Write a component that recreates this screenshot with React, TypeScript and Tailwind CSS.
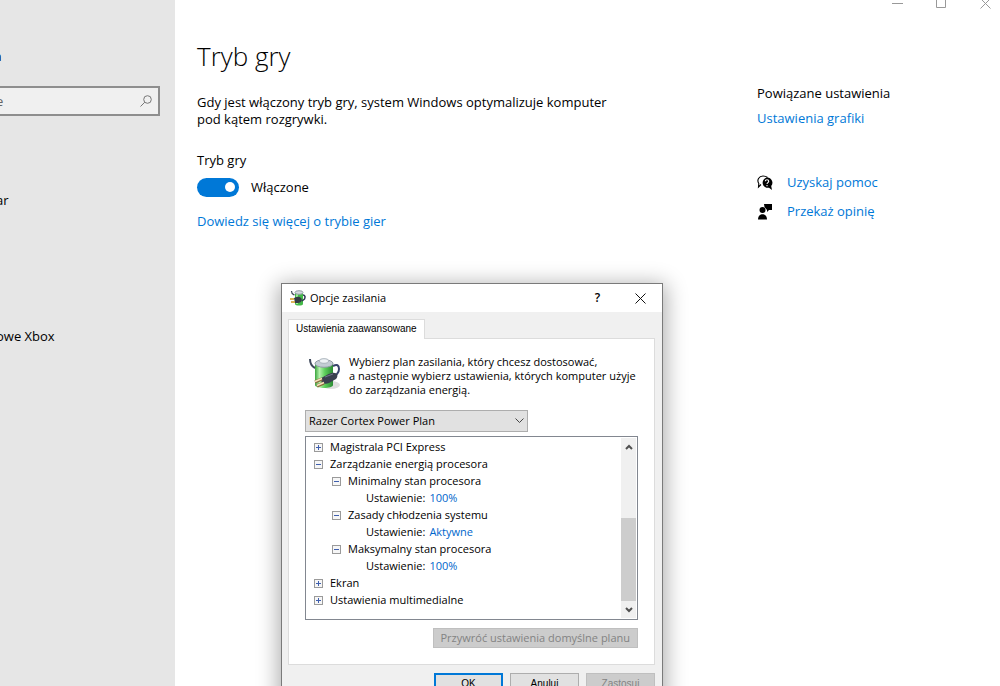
import { useState } from "react";
import type { ReactNode } from "react";

const sidebarItems = [
  { label: "ar", top: "mt-[76px]" },
  { label: "owe Xbox", top: "mt-[119px]" },
];

type TreeNode = {
  label: string;
  open?: boolean;
  value?: string;
  children?: TreeNode[];
};

const powerTree: TreeNode[] = [
  { label: "Magistrala PCI Express", open: false },
  {
    label: "Zarządzanie energią procesora",
    open: true,
    children: [
      { label: "Minimalny stan procesora", open: true, value: "100%" },
      { label: "Zasady chłodzenia systemu", open: true, value: "Aktywne" },
      { label: "Maksymalny stan procesora", open: true, value: "100%" },
    ],
  },
  { label: "Ekran", open: false },
  { label: "Ustawienia multimedialne", open: false },
];

function BatteryIcon({ className }: { className: string }) {
  return (
    <svg className={className} viewBox="0 0 32 34" fill="none">
      <defs>
        <linearGradient id="cell" x1="0" y1="0" x2="1" y2="0">
          <stop offset="0" stopColor="#3aa53d" />
          <stop offset="0.25" stopColor="#b4f2ab" />
          <stop offset="0.55" stopColor="#5ccf5a" />
          <stop offset="1" stopColor="#2b8a34" />
        </linearGradient>
      </defs>
      <ellipse cx="22" cy="28" rx="9" ry="4" fill="#dedede" />
      <path d="M6 6v22c0 4 18 4 18 0V6z" fill="url(#cell)" />
      <ellipse cx="15" cy="6.500" rx="9" ry="3.800" fill="#c3ccd4" stroke="#8f9aa4" />
      <ellipse cx="15" cy="4" rx="4.500" ry="2.300" fill="#eef2f5" stroke="#aab4bc" />
      <path d="M1 2c0 4 1 7 5 9" stroke="#3f4a5c" strokeWidth="2" />
      <path d="M24 9c4-2 6-1 6 3s-1 4-3 6" stroke="#38426b" strokeWidth="2" />
      <path d="M12 21c3-1 8-5 11-5 5-1 7 3 4 6l-7 4c-4 2-9 0-8-5z" fill="#3a404f" />
      <path d="M16 20l8-3" stroke="#70788a" />
      <path d="M13 22l-7 3M15 26l-7 3" stroke="#8a6b3c" strokeWidth="3" />
      <path d="M13 21.500l-7 3M15 25.500l-7 3" stroke="#f5e3bd" strokeWidth="1.400" />
    </svg>
  );
}

function SmallBatteryIcon({ className }: { className: string }) {
  return (
    <svg className={className} viewBox="0 0 16 16" fill="none">
      <path d="M5 3v11c0 2 8 2 8 0V3z" fill="#43b948" />
      <path d="M6 4v10h2V4z" fill="#9be896" />
      <ellipse cx="9" cy="2.500" rx="4" ry="1.800" fill="#d3dadf" stroke="#929da5" />
      <path d="M1.500 1c0 3 1 3 3 4" stroke="#3b4654" strokeWidth="1.200" />
      <path d="M13 5c2 0 2.500 2 1.500 4L12 11" stroke="#2f3853" strokeWidth="1.500" />
      <path d="M4 8c3-1 5-2 7 0s0 5-3 5H5z" fill="#353a45" />
      <path d="M0 9h4M1 12h4" stroke="#d09a22" strokeWidth="1.600" />
    </svg>
  );
}

function HelpIcon() {
  return (
    <svg className="h-4 w-4" viewBox="0 0 16 16" fill="none">
      <path d="M4 9.500L1.500 12l.3-3.500C-.5 5 2 1 6 1c2 0 3.500.6 4.500 1.500" stroke="#000" strokeWidth="1.100" />
      <path d="M10 2.500a5.200 5.200 0 1 0 2 10.200l3 2.300-.8-4A5.200 5.200 0 0 0 10 2.500z" fill="#000" />
      <path d="M8.300 6.300c0-2 3.400-2 3.400 0 0 1.300-1.700 1.300-1.700 2.700M10 10v1.200" stroke="#fff" strokeWidth="1.100" />
    </svg>
  );
}

function FeedbackIcon() {
  return (
    <svg className="h-4 w-4" viewBox="0 0 16 16" fill="#000">
      <path d="M7 0h8v6h-3l-2 2V6L7.500 3z" />
      <circle cx="5.500" cy="6" r="3" />
      <path d="M1 15.500c0-7 9-7 9 0z" />
    </svg>
  );
}

function Expander({ open, label, onClick }: { open: boolean; label: string; onClick: () => void }) {
  return (
    <button type="button" aria-label={label} aria-expanded={open} onClick={onClick} className="mt-[2px] shrink-0">
      <svg className="h-[9px] w-[9px]" viewBox="0 0 9 9" fill="none">
        <rect x="0.5" y="0.5" width="8" height="8" fill="#f6f6f6" stroke="#9a9a9a" />
        <path d={open ? "M2 4.500h5" : "M2 4.500h5M4.500 2v5"} stroke="#3f5fae" />
      </svg>
    </button>
  );
}

function TreeItem({ node }: { node: TreeNode }) {
  const [open, setOpen] = useState(!!node.open);
  return (
    <li>
      <div className="flex h-[17px] items-center gap-[7px]">
        <Expander open={open} label={node.label} onClick={() => setOpen(!open)} />
        <span>{node.label}</span>
      </div>
      {open && node.children && (
        <ul className="pl-[18px]">
          {node.children.map((child) => (
            <TreeItem key={child.label} node={child} />
          ))}
        </ul>
      )}
      {open && node.value && (
        <div className="flex h-[17px] items-center gap-1 pl-[34px]">
          <span>Ustawienie:</span>
          <a href="#" className="text-[#0066cc]">{node.value}</a>
        </div>
      )}
    </li>
  );
}

function SideLink({ icon, children }: { icon: ReactNode; children: ReactNode }) {
  return (
    <a href="#" className="flex h-[29px] items-center gap-[14px] text-[#0078d7]">
      {icon}
      {children}
    </a>
  );
}

function PowerDialog() {
  return (
    <div
      role="dialog"
      aria-label="Opcje zasilania"
      className="absolute top-[283px] left-[281px] w-[382px] border border-[#7a7a7a] bg-[#f0f0f0] font-['Open_Sans',sans-serif] text-[11px] leading-[14px] text-black shadow-[0_4px_20px_3px_rgba(0,0,0,0.32)]"
    >
      {/* Title bar */}
      <div className="flex h-7 items-center bg-white pl-2">
        <SmallBatteryIcon className="h-4 w-4" />
        <h2 className="ml-1 flex-1">Opcje zasilania</h2>
        <button type="button" className="w-[43px] text-[12px] font-semibold">?</button>
        <button type="button" aria-label="Zamknij" className="flex w-[43px] justify-center">
          <svg className="h-[11px] w-[11px]" viewBox="0 0 11 11" stroke="#111">
            <path d="M0.500 0.500l10 10M10.500 0.500l-10 10" />
          </svg>
        </button>
      </div>

      <div className="pt-[7px] pr-[7px] pl-[6px]">
        <button
          type="button"
          className="relative z-10 -mb-px block h-5 border border-b-0 border-[#dcdcdc] bg-white px-[7px] pb-[2px] font-['Liberation_Sans',sans-serif] text-[10px]"
        >
          Ustawienia zaawansowane
        </button>

        <div className="border border-[#dcdcdc] bg-white px-4 pt-4 pb-4">
          <div className="flex gap-2">
            <BatteryIcon className="ml-1 mt-[2px] h-[34px] w-8" />
            <p>
              Wybierz plan zasilania, który chcesz dostosować,<br />
              a następnie wybierz ustawienia, których komputer użyje<br />
              do zarządzania energią.
            </p>
          </div>

          <div className="relative mt-[13px] w-[223px]">
            <select aria-label="Plan zasilania" className="block h-[22px] w-full appearance-none border border-[#adadad] bg-[#e1e1e1] px-[3px]">
              <option>Razer Cortex Power Plan</option>
            </select>
            <svg className="pointer-events-none absolute top-2 right-1 h-[6px] w-[9px]" viewBox="0 0 9 6" fill="none" stroke="#444">
              <path d="M0.500 0.500l4 4 4-4" />
            </svg>
          </div>

          {/* Settings tree */}
          <div className="mt-1 flex h-[184px] border border-[#828790] p-px">
            <ul className="flex-1 pl-[7px]">
              {powerTree.map((node) => (
                <TreeItem key={node.label} node={node} />
              ))}
            </ul>
            <div className="flex w-[15px] flex-col bg-[#f0f0f0]">
              <button type="button" aria-label="W górę" className="flex h-[17px] items-center justify-center">
                <svg className="h-[6px] w-2" viewBox="0 0 8 6" fill="none" stroke="#505050" strokeWidth="2">
                  <path d="M1 5l3-3 3 3" />
                </svg>
              </button>
              <div className="flex-1" />
              <div className="h-[83px] bg-[#cdcdcd]" />
              <button type="button" aria-label="W dół" className="flex h-[17px] items-center justify-center">
                <svg className="h-[6px] w-2" viewBox="0 0 8 6" fill="none" stroke="#505050" strokeWidth="2">
                  <path d="M1 1l3 3 3-3" />
                </svg>
              </button>
            </div>
          </div>

          <button type="button" disabled className="mt-2 ml-auto block h-5 border border-[#bfbfbf] bg-[#cccccc] px-[7px] text-[#838383]">
            Przywróć ustawienia domyślne planu
          </button>
        </div>

        <div className="flex justify-end gap-[7px] pt-2 pb-2 font-['Liberation_Sans',sans-serif] text-[10px]">
          <button type="button" className="h-[22px] w-[69px] border-2 border-[#0078d7] bg-[#e1e1e1]">OK</button>
          <button type="button" className="h-[22px] w-[69px] border border-[#adadad] bg-[#e1e1e1]">Anuluj</button>
          <button type="button" disabled className="h-[22px] w-[69px] border border-[#bfbfbf] bg-[#cccccc] text-[#838383]">Zastosuj</button>
        </div>
      </div>
    </div>
  );
}

export default function App() {
  const [gameMode, setGameMode] = useState(true);

  return (
    <div className="relative flex h-screen overflow-hidden bg-white font-['Open_Sans',sans-serif] text-[13px] leading-[17px] text-black">
      {/* Sidebar */}
      <nav className="w-[175px] shrink-0 overflow-hidden bg-[#e6e6e6] pt-12">
        <div className="-ml-[6px] font-semibold">a</div>
        <label className="mt-[21px] mr-[15px] -ml-[6px] flex h-[30px] items-center border-2 border-[#8e8e8e] bg-[#f0f0f0] pr-[6px]">
          <input aria-label="Znajdź ustawienie" placeholder="e" className="min-w-0 flex-1 outline-none placeholder:text-[#666]" />
          <svg className="h-3 w-3" viewBox="0 0 12 12" fill="none" stroke="#777">
            <circle cx="7.500" cy="4.500" r="3.800" />
            <path d="M4.800 7.200L0.500 11.500" />
          </svg>
        </label>
        {sidebarItems.map((item) => (
          <a key={item.label} href="#" className={`-ml-1 block ${item.top}`}>
            {item.label}
          </a>
        ))}
      </nav>

      <div className="min-w-0 flex-1">
        {/* Window controls */}
        <div className="-mt-3 flex justify-end gap-[14px]">
          <button type="button" aria-label="Minimalizuj" className="flex h-[30px] w-[30px] items-center justify-center">
            <svg className="h-[11px] w-[11px]" viewBox="0 0 11 11" stroke="#999"><path d="M0 5.500h11" /></svg>
          </button>
          <button type="button" aria-label="Maksymalizuj" className="flex h-[30px] w-[30px] items-center justify-center">
            <svg className="h-[11px] w-[11px]" viewBox="0 0 11 11" fill="none" stroke="#999"><path d="M0.500 0.500h9v9h-9z" /></svg>
          </button>
          <button type="button" aria-label="Zamknij" className="flex h-[30px] w-[30px] items-center justify-center">
            <svg className="h-[11px] w-[11px]" viewBox="0 0 11 11" stroke="#999"><path d="M0.500 0.500l10 10M10.500 0.500l-10 10" /></svg>
          </button>
        </div>

        <div className="flex pl-[22px]">
          <main className="w-[560px] shrink-0 pt-5">
            <h1 className="text-[26px] leading-9 font-light">Tryb gry</h1>
            <p className="mt-5 max-w-[420px]">
              Gdy jest włączony tryb gry, system Windows optymalizuje komputer<br />
              pod kątem rozgrywki.
            </p>
            <h2 className="mt-6">Tryb gry</h2>
            <label className="mt-2 flex h-5 items-center gap-3">
              <input
                type="checkbox"
                role="switch"
                checked={gameMode}
                onChange={(e) => setGameMode(e.target.checked)}
                className="flex h-[19px] w-[42px] appearance-none items-center rounded-full bg-gray-400 px-1 before:h-[10px] before:w-[10px] before:rounded-full before:bg-white checked:justify-end checked:bg-[#0078d7]"
              />
              {gameMode ? "Włączone" : "Wyłączone"}
            </label>
            <a href="#" className="mt-4 inline-block text-[#0078d7]">Dowiedz się więcej o trybie gier</a>
          </main>

          <aside className="pt-[67px]">
            <h2>Powiązane ustawienia</h2>
            <a href="#" className="mt-2 block text-[#0078d7]">Ustawienia grafiki</a>
            <div className="mt-[41px]">
              <SideLink icon={<HelpIcon />}>Uzyskaj pomoc</SideLink>
              <SideLink icon={<FeedbackIcon />}>Przekaż opinię</SideLink>
            </div>
          </aside>
        </div>
      </div>

      <PowerDialog />
    </div>
  );
}
